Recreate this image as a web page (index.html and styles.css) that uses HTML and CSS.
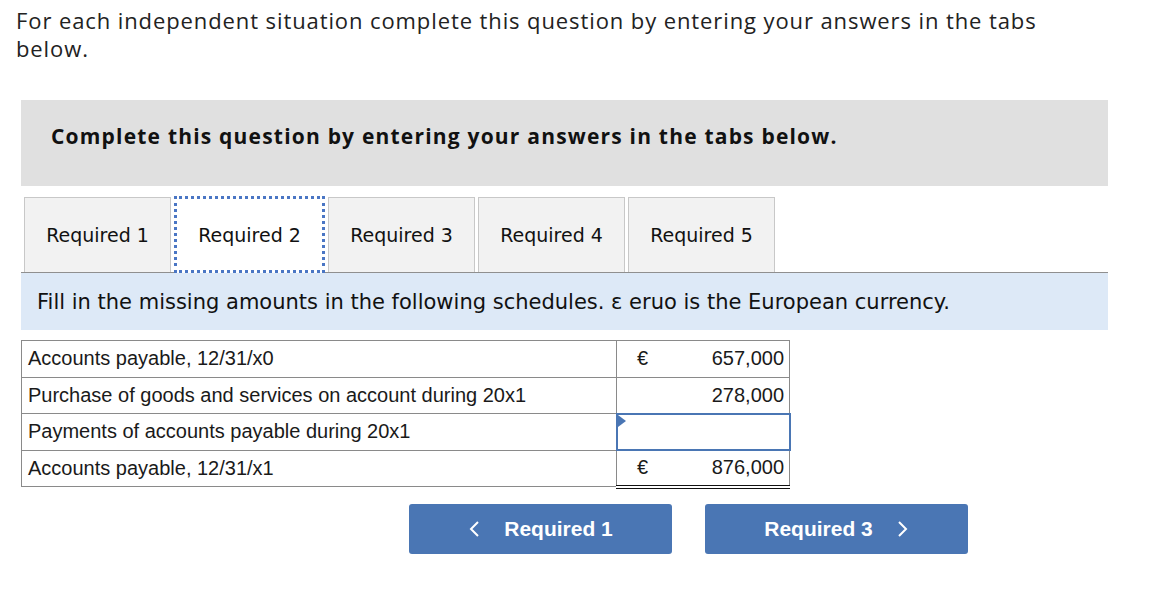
FILE: index.html
```html
<!DOCTYPE html>
<html>
<head>
<meta charset="utf-8">
<link rel="stylesheet" href="styles.css">
</head>
<body>
<p class="intro">For each independent situation complete this question by entering your answers in the tabs below.</p>
<div class="panel">
  <div class="banner">Complete this question by entering your answers in the tabs below.</div>
  <div class="tabs">
    <div class="tab">Required 1</div>
    <div class="tab active">Required 2</div>
    <div class="tab">Required 3</div>
    <div class="tab">Required 4</div>
    <div class="tab">Required 5</div>
  </div>
  <div class="instr">Fill in the missing amounts in the following schedules. ε eruo is the European currency.</div>
  <table class="sched">
    <tr><td class="lbl">Accounts payable, 12/31/x0</td><td class="amt"><span class="cur">€</span><span class="val">657,000</span></td></tr>
    <tr><td class="lbl">Purchase of goods and services on account during 20x1</td><td class="amt"><span class="cur"></span><span class="val">278,000</span></td></tr>
    <tr><td class="lbl">Payments of accounts payable during 20x1</td><td class="amt input"><span class="flag"></span></td></tr>
    <tr><td class="lbl">Accounts payable, 12/31/x1</td><td class="amt total"><span class="cur">€</span><span class="val">876,000</span></td></tr>
  </table>
  <div class="nav">
    <div class="btn"><svg class="chev" width="12" height="18" viewBox="0 0 12 18"><path d="M10 2 L3 9 L10 16" fill="none" stroke="#fff" stroke-width="2"/></svg><span>Required 1</span></div>
    <div class="btn"><span>Required 3</span><svg class="chev" width="12" height="18" viewBox="0 0 12 18"><path d="M2 2 L9 9 L2 16" fill="none" stroke="#fff" stroke-width="2"/></svg></div>
  </div>
</div>
</body>
</html>
```

FILE: styles.css
```css
html, body { margin: 0; padding: 0; background: #fff; }
body { color: #1a1a1a; }
.intro {
  margin: 0;
  padding: 6px 0 0 16px;
  width: 1060px;
  font-family: "Open Sans", "Liberation Sans", sans-serif;
  font-size: 22px;
  letter-spacing: 0.9px;
  line-height: 28px;
  color: #222;
}
.panel { margin: 38px 0 0 21px; width: 1087px; }
.banner {
  box-sizing: border-box;
  background: #e0e0e0;
  height: 86px;
  display: flex;
  align-items: center;
  padding: 0 0 14px 30px;
  font-family: "Open Sans", "Liberation Sans", sans-serif;
  font-weight: 700;
  font-size: 21px;
  letter-spacing: 1.2px;
  color: #111;
}
.tabs {
  margin-top: 11px;
  display: flex;
  gap: 3px;
  padding-left: 3px;
  border-bottom: 1px solid #8f8f8f;
  height: 75px;
}
.tab {
  box-sizing: border-box;
  height: 75px;
  width: 147px;
  background: #f2f2f2;
  border: 1px solid #c8c8c8;
  border-bottom: none;
  display: flex;
  align-items: center;
  justify-content: center;
  font-family: "DejaVu Sans", Verdana, sans-serif;
  font-size: 19px;
  color: #111;
}
.tab.active {
  background: #fff;
  width: 151px;
  border: 3px dotted #4a76c4;
  height: 77px;
  margin-top: -1px;
}
.instr {
  background: #dde9f7;
  height: 57px;
  display: flex;
  align-items: center;
  padding-left: 16px;
  font-family: "DejaVu Sans", Verdana, sans-serif;
  font-size: 21px;
  color: #111;
}
.sched {
  margin-top: 10px;
  border-collapse: collapse;
  font-family: "Liberation Sans", Arial, sans-serif;
  font-size: 20px;
  color: #1a1a1a;
}
.sched td { border: 1px solid #8a8a8a; height: 36.5px; padding: 0; box-sizing: border-box; }
.lbl { width: 595px; padding-left: 6px !important; }
.amt { width: 173px; }
.cur { display: inline-block; width: 32px; padding-left: 20px; }
.val { display: inline-block; width: 115px; text-align: right; }
.amt.input { border: 2px solid #4a76b4; position: relative; }
.flag {
  position: absolute; left: 0; top: 0;
  width: 0; height: 0;
  border-top: 6px solid transparent;
  border-bottom: 6px solid transparent;
  border-left: 8px solid #4a76b4;
}
.amt.total { border-bottom: 4px double #111; }
.nav { display: flex; gap: 33px; margin: 15px 0 0 388px; }
.btn {
  width: 263px; height: 50px;
  background: #4a76b4;
  border-radius: 3px;
  display: flex; align-items: center; justify-content: center; gap: 24px;
  color: #fff;
  font-family: "Liberation Sans", Arial, sans-serif;
  font-weight: 700;
  font-size: 21px;
}
.chev { display: block; }
```
